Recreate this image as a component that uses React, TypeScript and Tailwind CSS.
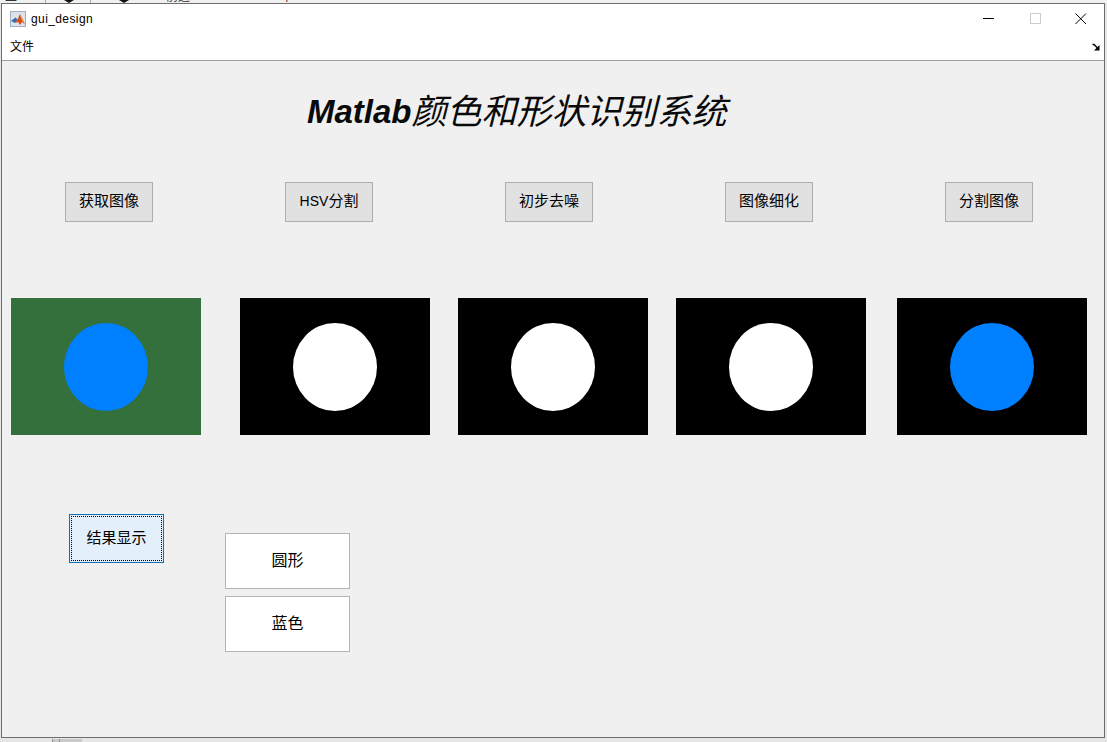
import React from "react";

const font = "font-['Liberation_Sans','Noto_Sans_CJK_SC',sans-serif]";

const MatlabIcon = () => (
  <svg width="16" height="16" viewBox="0 0 16 16">
    <rect x="0.5" y="0.5" width="15" height="15" fill="#dce3ee" stroke="#a3afbf" />
    <path d="M1 10 5.5 6.5 7.5 8.5 5 12Z" fill="#3a6ca8" />
    <path d="M5 12 7.5 8.5 10 3 12 7 15 13.5 12 11 10 14 8 11Z" fill="#d4501c" />
    <path d="M10 3 12 7 15 13.5 12 9.5 10.5 6Z" fill="#f2a32e" />
  </svg>
);

const ActionButton = ({ children }: { children: React.ReactNode }) => (
  <div className="flex h-[40px] w-[88px] items-center justify-center border border-[#adadad] bg-[#e1e1e1] pb-[1px] text-[15px] text-black">
    {children}
  </div>
);

const Plot = ({ ml, bg, dot }: { ml: string; bg: string; dot: string }) => (
  <div className={`flex h-[137px] w-[190px] items-center justify-center ${ml} ${bg}`}>
    <div className={`mt-[1px] h-[88px] w-[84px] rounded-[50%] ${dot}`} />
  </div>
);

const ResultBox = ({ label }: { label: string }) => (
  <div className="flex h-[56px] w-[125px] items-center justify-center border border-[#b4b4b4] bg-white text-[16px] text-black">
    {label}
  </div>
);

export default function App() {
  return (
    <div className={`flex h-[742px] w-[1107px] flex-col overflow-hidden bg-[#e6e6e6] ${font}`}>
      {/* bits of the window behind */}
      <div className="flex h-[3px] overflow-hidden bg-[#f0f0f0] text-[12px] leading-[12px] text-[#333333]">
        <span className="ml-[5px] mt-[-9px] w-[20px]">工具</span>
        <span className="ml-[20px] h-full w-[1px] bg-[#b0b0b0]" />
        <svg width="12" height="3" viewBox="0 0 12 3" className="ml-[17px]">
          <path d="M1 0H11L6 3Z" fill="#111111" />
        </svg>
        <span className="ml-[15px] h-full w-[1px] bg-[#b0b0b0]" />
        <svg width="12" height="3" viewBox="0 0 12 3" className="ml-[27px]">
          <path d="M1 0H11L6 3Z" fill="#111111" />
        </svg>
        <span className="ml-[36px] mt-[-9px]">前进</span>
        <span className="ml-[92px] mt-[-9px]">节</span>
      </div>
      <div className="ml-[1px] flex h-[735px] w-[1104px] flex-col border border-[#6d6d6d] bg-[#f0f0f0]">
        {/* title bar */}
        <div className="flex h-[30px] items-center bg-white pl-[8px] text-[12px] text-black">
          <MatlabIcon />
          <span className="ml-[5px] tracking-[0.4px]">gui_design</span>
          <div className="ml-auto flex items-center">
            <svg width="46" height="30" viewBox="0 0 46 30">
              <path d="M17 14.5H28" stroke="#000" />
            </svg>
            <svg width="46" height="30" viewBox="0 0 46 30">
              <rect x="18.5" y="9.5" width="10" height="10" fill="none" stroke="#cccccc" />
            </svg>
            <svg width="46" height="30" viewBox="0 0 46 30">
              <path d="M17.5 9.5 28 20M28 9.5 17.5 20" stroke="#000" fill="none" />
            </svg>
          </div>
        </div>
        {/* menu */}
        <div className="flex h-[27px] items-center justify-between border-b border-[#a0a0a0] bg-white pl-[8px] pr-[4px] text-[12px] text-black">
          <span>文件</span>
          <svg width="8" height="8" viewBox="0 0 8 8">
            <path d="M0.5 1.5H2L5.5 5" stroke="#000" strokeWidth="1.4" fill="none" />
            <path d="M7.5 2V7.5H2Z" fill="#000" />
          </svg>
        </div>

        <div className="flex flex-1 flex-col">
          <h1 className="ml-[305px] mt-[28px] flex h-[46px] items-center italic text-[#0a0a0a]">
            <span className="text-[33px] font-bold">Matlab</span>
            <span className="text-[35px] font-normal">颜色和形状识别系统</span>
          </h1>

          <div className="ml-[63px] mt-[47px] flex gap-[132px]">
            <ActionButton>获取图像</ActionButton>
            <ActionButton>
              <span className="text-[14px]">HSV</span>分割
            </ActionButton>
            <ActionButton>初步去噪</ActionButton>
            <ActionButton>图像细化</ActionButton>
            <ActionButton>分割图像</ActionButton>
          </div>

          <div className="mt-[76px] flex">
            <Plot ml="ml-[9px]" bg="bg-[#33703b]" dot="bg-[#0080ff]" />
            <Plot ml="ml-[39px]" bg="bg-black" dot="bg-white" />
            <Plot ml="ml-[28px]" bg="bg-black" dot="bg-white" />
            <Plot ml="ml-[28px]" bg="bg-black" dot="bg-white" />
            <Plot ml="ml-[31px]" bg="bg-black" dot="bg-[#0080ff]" />
          </div>

          <div className="mt-[79px] flex items-start">
            <div className="ml-[67px] flex h-[49px] w-[95px] items-center justify-center border border-[#0f6fb0] bg-[#e3f0fb] p-[1px] text-[15px] text-black">
              <div className="flex h-full w-full items-center justify-center border border-dotted border-black pb-[1px]">
                结果显示
              </div>
            </div>
            <div className="ml-[61px] mt-[19px] flex flex-col gap-[7px]">
              <ResultBox label="圆形" />
              <ResultBox label="蓝色" />
            </div>
          </div>
        </div>
      </div>
      {/* bit of the window behind, below */}
      <div className="ml-[52px] mt-[1px] flex h-[3px] w-[30px] gap-[6px] bg-[#c9c9c9]">
        <span className="h-full w-[1px] bg-[#8f8f8f]" />
        <span className="h-full w-[1px] bg-[#8f8f8f]" />
      </div>
    </div>
  );
}
